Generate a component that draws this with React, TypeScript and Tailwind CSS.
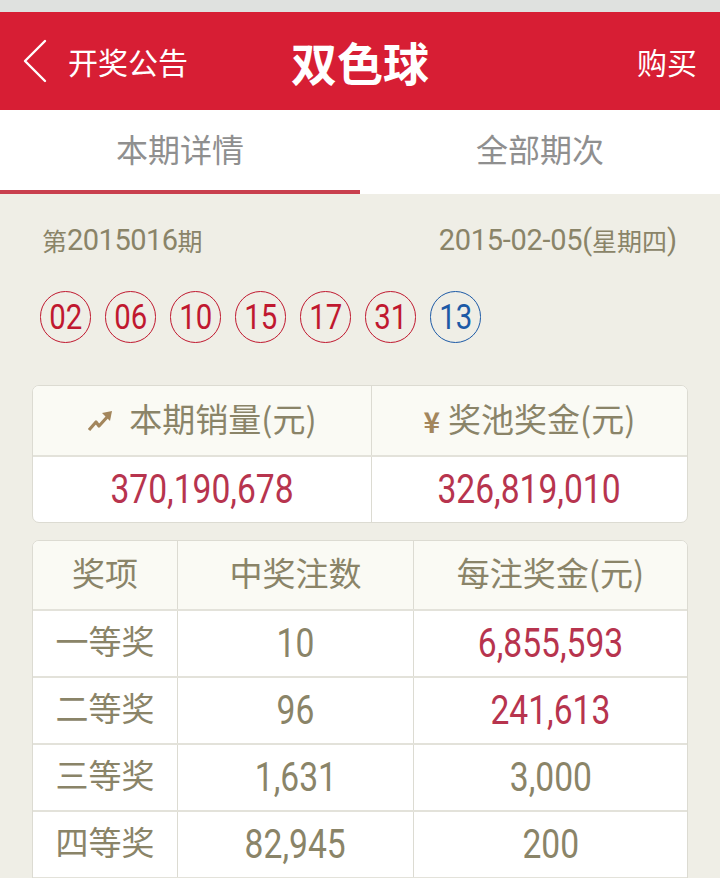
import React from "react";

const cjk = "font-['Noto_Sans_CJK_SC','Noto_Sans',sans-serif]";
const num = "font-['Roboto','Noto_Sans_CJK_SC',sans-serif]";

const reds = ["02", "06", "10", "15", "17", "31"];

const prizes = [
  { name: "一等奖", count: "10", money: "6,855,593", hot: true },
  { name: "二等奖", count: "96", money: "241,613", hot: true },
  { name: "三等奖", count: "1,631", money: "3,000", hot: false },
  { name: "四等奖", count: "82,945", money: "200", hot: false },
];

function Num({ children, className = "" }: { children: React.ReactNode; className?: string }) {
  return (
    <span className={`${num} inline-block scale-x-[0.84] whitespace-nowrap ${className}`}>
      {children}
    </span>
  );
}

function Ball({ n, blue }: { n: string; blue?: boolean }) {
  return (
    <div
      className={`flex h-[52px] w-[51px] items-center justify-center rounded-full border ${
        blue ? "border-[#1d5aa6] text-[#1d5aa6]" : "border-[#c0182f] text-[#c0182f]"
      }`}
    >
      <Num className="text-[35px] leading-none">{n}</Num>
    </div>
  );
}

export default function App() {
  return (
    <div className={`h-[878px] w-[720px] overflow-hidden bg-[#efeee6] ${cjk}`}>
      <div className="h-[12px] bg-[#dfe1df]" />

      <div className="relative flex h-[98px] items-center bg-[#d71e34] text-white">
        <svg className="ml-[22px] h-[44px] w-[26px]" viewBox="0 0 26 44" fill="none">
          <path d="M23 2 L3 22 L23 42" stroke="#fff" strokeWidth="2.4" strokeLinecap="round" strokeLinejoin="round" />
        </svg>
        <span className="ml-[20px] text-[30px] leading-none">开奖公告</span>
        <span className="absolute left-1/2 -translate-x-1/2 text-[46px] font-bold leading-none">双色球</span>
        <span className="ml-auto mr-[23px] text-[30px] leading-none">购买</span>
      </div>

      <div className="flex h-[84px] bg-white">
        <div className="relative flex w-1/2 items-center justify-center text-[32px] leading-none text-[#8f8f8f]">
          <span className="-mt-[8px]">本期详情</span>
          <div className="absolute bottom-0 left-0 h-[4px] w-full bg-[#c9404e]" />
        </div>
        <div className="flex w-1/2 items-center justify-center text-[32px] leading-none text-[#8f8f8f]">
          <span className="-mt-[8px]">全部期次</span>
        </div>
      </div>

      <div className="mt-[22px] flex h-[48px] items-center justify-between pl-[42px] pr-[43px] text-[25px] leading-none text-[#8a8468]">
        <span className="flex items-center">
          第<span className={`${num} text-[29px] tracking-[-0.5px]`}>2015016</span>期
        </span>
        <span className="flex items-center">
          <span className={`${num} text-[29px] tracking-[-0.3px]`}>2015-02-05(</span>星期四
          <span className={`${num} text-[29px]`}>)</span>
        </span>
      </div>

      <div className="ml-[40px] mt-[27px] flex gap-[14px]">
        {reds.map((n) => (
          <Ball key={n} n={n} />
        ))}
        <Ball n="13" blue />
      </div>

      <div className="mx-[32px] mt-[42px] overflow-hidden rounded-[7px] border border-[#dcdbd2] bg-white">
        <div className="flex h-[71px] border-b-2 border-[#e3e2da] bg-[#fafaf4] text-[33px] leading-none text-[#8a8468]">
          <div className="flex w-[339px] items-center justify-center border-r border-[#dcdbd2] pb-[4px]">
            <svg className="mr-[14px] mt-[4px] h-[24px] w-[28px]" viewBox="0 0 28 24" fill="none">
              <path d="M2 21 L9 13 L12 17 L22 6" stroke="#a3865c" strokeWidth="3.2" strokeLinejoin="round" />
              <path d="M15 4 L25 2 L23 12 Z" fill="#a3865c" />
            </svg>
            <span>本期销量(元)</span>
          </div>
          <div className="flex flex-1 items-center justify-center pb-[4px]">
            <span className="mr-[8px] mt-[4px] text-[28px] font-bold text-[#a3865c]">¥</span>
            <span>奖池奖金(元)</span>
          </div>
        </div>
        <div className="flex h-[65px] text-[#b7344e]">
          <div className="flex w-[339px] items-center justify-center border-r border-[#dcdbd2]">
            <Num className="text-[40px] leading-none">370,190,678</Num>
          </div>
          <div className="flex flex-1 items-center justify-center">
            <Num className="text-[40px] leading-none">326,819,010</Num>
          </div>
        </div>
      </div>

      <div className="mx-[32px] mt-[17px] overflow-hidden rounded-t-[7px] border border-[#dcdbd2] bg-white text-[#8a8468]">
        <div className="flex h-[70px] border-b-2 border-[#e3e2da] bg-[#fafaf4] text-[33px] leading-none">
          <div className="flex w-[145px] items-center justify-center border-r border-[#dcdbd2] pb-[6px]">奖项</div>
          <div className="flex w-[236px] items-center justify-center border-r border-[#dcdbd2] pb-[6px]">中奖注数</div>
          <div className="flex flex-1 items-center justify-center pb-[6px]">每注奖金(元)</div>
        </div>
        {prizes.map((p) => (
          <div key={p.name} className="flex h-[67px] border-b-2 border-[#e3e2da]">
            <div className="flex w-[145px] items-center justify-center border-r border-[#dcdbd2] pb-[6px] text-[33px] leading-none">
              {p.name}
            </div>
            <div className="flex w-[236px] items-center justify-center border-r border-[#dcdbd2]">
              <Num className="text-[40px] leading-none">{p.count}</Num>
            </div>
            <div className={`flex flex-1 items-center justify-center ${p.hot ? "text-[#b7344e]" : ""}`}>
              <Num className="text-[40px] leading-none">{p.money}</Num>
            </div>
          </div>
        ))}
      </div>
    </div>
  );
}
